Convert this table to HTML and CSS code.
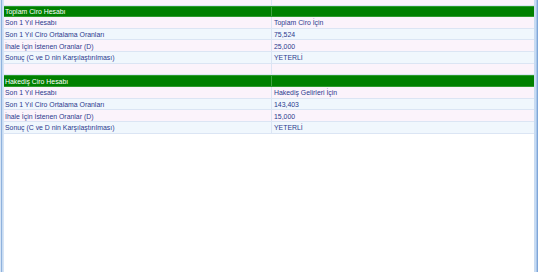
FILE: index.html
```html
<!DOCTYPE html>
<html>
<head>
<meta charset="utf-8">
<link rel="stylesheet" href="styles.css">
</head>
<body>
<div class="frame">
  <div class="edge-left"></div>
  <div class="grid">
    <div class="row top pink"><div class="cell c1"></div><div class="cell c2"></div></div>

    <div class="row head"><div class="cell c1">Toplam Ciro Hesabı</div><div class="cell c2"></div></div>
    <div class="row pink"><div class="cell c1">Son 1 Yıl Hesabı</div><div class="cell c2">Toplam Ciro İçin</div></div>
    <div class="row blue"><div class="cell c1">Son 1 Yıl Ciro Ortalama Oranları</div><div class="cell c2">75,524</div></div>
    <div class="row pink"><div class="cell c1">İhale İçin İstenen Oranlar (D)</div><div class="cell c2">25,000</div></div>
    <div class="row blue"><div class="cell c1">Sonuç (C ve D nin Karşılaştırılması)</div><div class="cell c2">YETERLİ</div></div>
    <div class="row pink"><div class="cell c1"></div><div class="cell c2"></div></div>

    <div class="row head"><div class="cell c1">Hakediş Ciro Hesabı</div><div class="cell c2"></div></div>
    <div class="row pink"><div class="cell c1">Son 1 Yıl Hesabı</div><div class="cell c2">Hakediş Gelirleri İçin</div></div>
    <div class="row blue"><div class="cell c1">Son 1 Yıl Ciro Ortalama Oranları</div><div class="cell c2">143,403</div></div>
    <div class="row pink"><div class="cell c1">İhale İçin İstenen Oranlar (D)</div><div class="cell c2">15,000</div></div>
    <div class="row blue"><div class="cell c1">Sonuç (C ve D nin Karşılaştırılması)</div><div class="cell c2">YETERLİ</div></div>
  </div>
  <div class="edge-right"></div>
</div>
</body>
</html>
```
FILE: styles.css
```css
html, body {
  margin: 0;
  padding: 0;
  background: #ffffff;
}
.frame {
  display: flex;
  width: 540px;
  height: 272px;
  overflow: hidden;
}
.edge-left {
  width: 4px;
  flex: none;
  background: linear-gradient(to right, #d6e4f5 0, #d6e4f5 1px, #8fb2dd 1px, #8fb2dd 2px, #c4d8f0 2px, #dbe8f7 4px);
}
.edge-right {
  width: 6px;
  flex: none;
  background: linear-gradient(to right, #c7dbf2 0, #c7dbf2 2px, #a9c6ea 2px, #a9c6ea 3px, #7fa6d8 3px, #7fa6d8 4px, #ffffff 4px);
}
.grid {
  flex: 1;
  display: flex;
  flex-direction: column;
  background: #ffffff;
  font-family: "Liberation Sans", Arial, sans-serif;
  font-size: 6.9px;
  color: #2b3a8e;
}
.row {
  display: flex;
  height: 11.65px;
  box-sizing: border-box;
  border-bottom: 1px solid #dbe5f4;
}
.row.top {
  height: 5.5px;
}
.pink {
  background: #fbf3fb;
}
.blue {
  background: #f0f7fd;
}
.head {
  background: #008000;
  color: #ffffff;
  border-bottom: 1px solid #2e9a2e;
  border-top: 1px solid #2e9a2e;
}
.cell {
  display: flex;
  align-items: center;
  padding-top: 1px;
  box-sizing: border-box;
  white-space: nowrap;
  overflow: hidden;
}
.c1 {
  width: 268px;
  padding-left: 1px;
  border-right: 1px solid #dbe5f4;
}
.c2 {
  flex: 1;
  padding-left: 2px;
}
.head .c1 {
  border-right-color: #3fa03f;
}
```
